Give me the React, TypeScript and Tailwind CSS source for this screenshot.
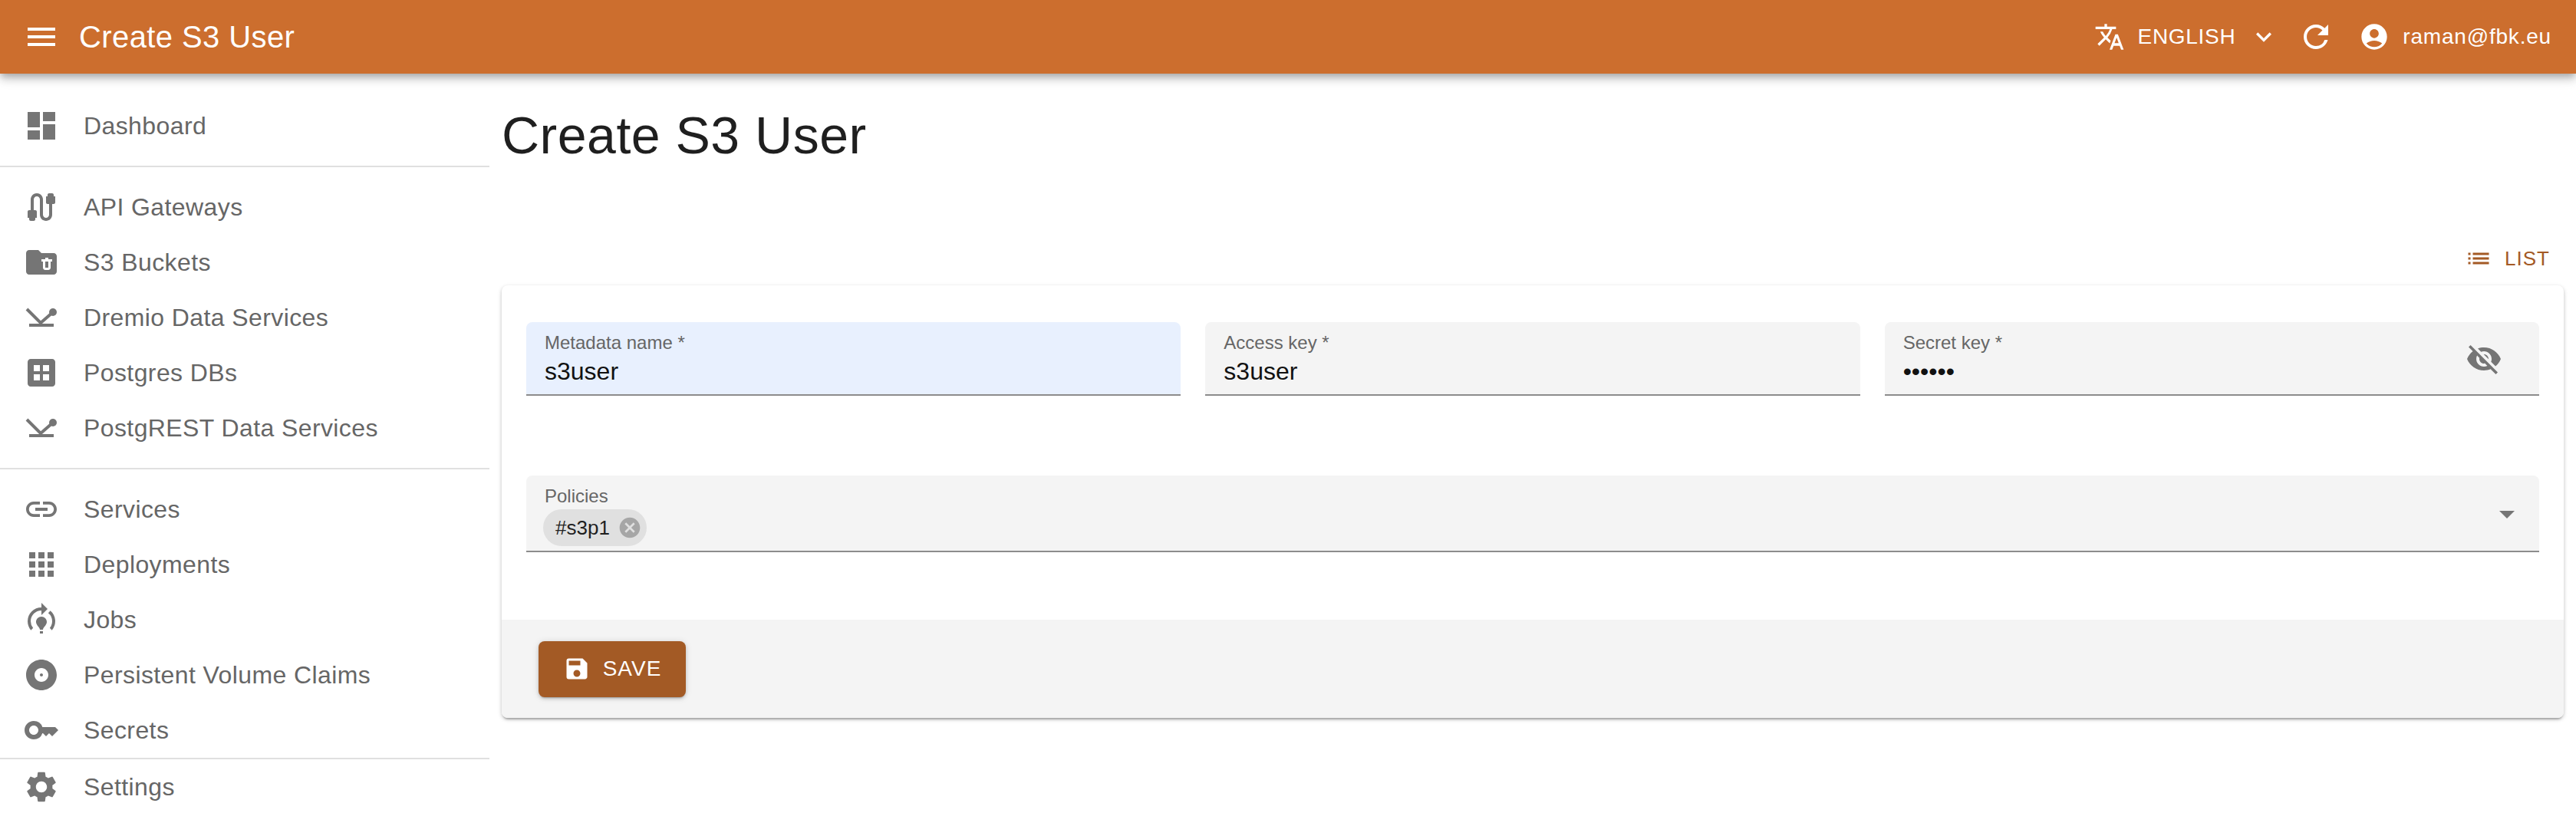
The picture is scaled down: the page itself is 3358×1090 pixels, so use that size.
import React from 'react';
import {
  MdMenu, MdTranslate, MdExpandMore, MdRefresh, MdAccountCircle, MdDashboard, MdCable, MdFolderDelete,
  MdDataset, MdLink, MdApps, MdModelTraining, MdAlbum, MdKey, MdSettings, MdList,
  MdVisibilityOff, MdCancel, MdArrowDropDown, MdSave,
} from 'react-icons/md';

type IconProps = { size?: number; className?: string };

// the data services icon isn't in the package, so it's drawn by hand
const DataServiceIcon = ({ size, className }: IconProps) => (
  <svg width={size} height={size} viewBox="0 0 24 24" fill="currentColor" className={className}>
    <path d="M2.5 6.5L11.5 15.5L19.5 8.5" fill="none" stroke="currentColor" strokeWidth="2" />
    <circle cx="19.5" cy="8.5" r="2.5" />
    <rect x="4" y="16" width="16" height="2" />
  </svg>
);

const NavItem = ({ icon: Icon, label }: { icon: React.ComponentType<IconProps>; label: string }) => (
  <div className="flex h-[72px] items-center pl-[30px] text-[32px] tracking-[0.4px] text-[#666666]">
    <Icon size={48} className="mr-[31px] shrink-0 text-[#757575]" />
    <span className="whitespace-nowrap">{label}</span>
  </div>
);

const Field = ({ label, value, focused, children }: { label: string; value: string; focused?: boolean; children?: React.ReactNode }) => (
  <div className={`relative h-24 rounded-t-lg border-b-2 border-[#8c8c8c] px-6 ${focused ? 'bg-[#e8f0fe]' : 'bg-[#f4f4f4]'}`}>
    <div className="pt-[13px] text-[24px] leading-[28px] text-[#666666]">{label}</div>
    <div className="mt-[5px] text-[32px] leading-[37px] text-[#111111]">{value}</div>
    {children}
  </div>
);

export default function App() {
  return (
    <div className="flex min-h-screen flex-col overflow-hidden bg-white font-['Liberation_Sans',sans-serif]">
      {/* Top bar */}
      <header className="relative z-10 flex h-24 items-center bg-[#cc6e2e] pl-[30px] pr-[32px] text-white shadow-[0_4px_8px_-2px_rgba(0,0,0,0.2),0_8px_10px_0_rgba(0,0,0,0.14),0_2px_20px_0_rgba(0,0,0,0.12)]">
        <MdMenu size={48} className="mr-[25px]" />
        <h1 className="flex-1 text-[40px] leading-none tracking-[0.4px]">Create S3 User</h1>
        <MdTranslate size={40} className="mr-[17px]" />
        <span className="text-[28px] tracking-[0.7px]">ENGLISH</span>
        <MdExpandMore size={40} className="ml-[17px] mr-[24px]" />
        <MdRefresh size={48} className="mr-[32px]" />
        <MdAccountCircle size={40} className="mr-[17px]" />
        <span className="text-[28px] tracking-[0.8px]">raman@fbk.eu</span>
      </header>

      <div className="flex flex-1">
        {/* Sidebar */}
        <aside className="w-[638px] shrink-0 pt-8">
          <NavItem icon={MdDashboard} label="Dashboard" />
          <div className="my-4 h-0.5 bg-[#e0e0e0]" />
          <NavItem icon={MdCable} label="API Gateways" />
          <NavItem icon={MdFolderDelete} label="S3 Buckets" />
          <NavItem icon={DataServiceIcon} label="Dremio Data Services" />
          <NavItem icon={MdDataset} label="Postgres DBs" />
          <NavItem icon={DataServiceIcon} label="PostgREST Data Services" />
          <div className="my-4 h-0.5 bg-[#e0e0e0]" />
          <NavItem icon={MdLink} label="Services" />
          <NavItem icon={MdApps} label="Deployments" />
          <NavItem icon={MdModelTraining} label="Jobs" />
          <NavItem icon={MdAlbum} label="Persistent Volume Claims" />
          <NavItem icon={MdKey} label="Secrets" />
          <div className="h-0.5 bg-[#e0e0e0]" />
          <NavItem icon={MdSettings} label="Settings" />
        </aside>

        {/* Main */}
        <main className="min-w-0 flex-1 pl-4 pr-4">
          <h2 className="mt-[36px] text-[68px] leading-[88px] tracking-[0.5px] text-[#1f1f1f]">Create S3 User</h2>
          <div className="mt-[89px] flex h-[56px] items-center justify-end pr-[18px] text-[#a35a25]">
            <MdList size={36} className="mr-4" />
            <span className="text-[26px] tracking-[1px]">LIST</span>
          </div>
          <div className="mt-[7px] rounded-lg bg-white shadow-[0_4px_2px_-2px_rgba(0,0,0,0.2),0_2px_4px_0_rgba(0,0,0,0.14),0_2px_6px_0_rgba(0,0,0,0.12)]">
            <div className="px-8 pt-12">
              <div className="grid grid-cols-3 gap-8">
                <Field label="Metadata name *" value="s3user" focused />
                <Field label="Access key *" value="s3user" />
                <Field label="Secret key *" value="••••••">
                  <MdVisibilityOff size={48} className="absolute right-12 top-6 text-[#757575]" />
                </Field>
              </div>
              <div className="relative mt-[104px] h-[100px] rounded-t-lg border-b-2 border-[#8c8c8c] bg-[#f4f4f4] px-6">
                <div className="pt-[13px] text-[24px] leading-[28px] text-[#666666]">Policies</div>
                <div className="-ml-[2px] mt-[3px] inline-flex h-12 items-center rounded-full bg-[#e0e0e0] pl-4 pr-[6px]">
                  <span className="text-[26px] text-[#1f1f1f]">#s3p1</span>
                  <MdCancel size={32} className="ml-[10px] text-[#a6a6a6]" />
                </div>
                <MdArrowDropDown size={48} className="absolute right-[18px] top-[26px] text-[#757575]" />
              </div>
            </div>
            <div className="mt-[88px] flex h-32 items-center rounded-b-lg bg-[#f4f4f4] pl-12">
              <button className="flex h-[73px] w-[192px] items-center justify-center rounded-lg bg-[#a35a25] text-white shadow-[0_3px_2px_-2px_rgba(0,0,0,0.2),0_2px_4px_0_rgba(0,0,0,0.14),0_1px_10px_0_rgba(0,0,0,0.12)]">
                <MdSave size={36} className="mr-4" />
                <span className="text-[28px] tracking-[1px]">SAVE</span>
              </button>
            </div>
          </div>
        </main>
      </div>
    </div>
  );
}
